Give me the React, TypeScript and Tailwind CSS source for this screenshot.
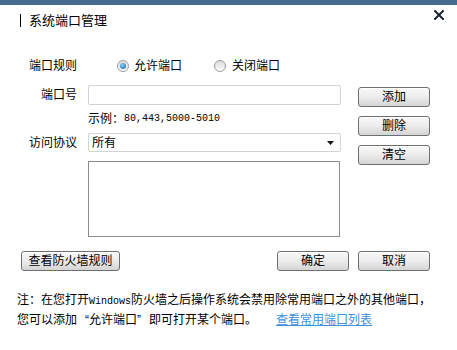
const btn =
  'flex h-[20px] items-center justify-center rounded-[3px] border border-[#6f6f6f] bg-gradient-to-b from-[#f8f8f8] via-[#ececec] to-[#d4d4d4] text-[12px] leading-none text-black shadow-[inset_0_1px_0_#ffffff]';

function Radio({ checked }: { checked: boolean }) {
  return (
    <span className="flex h-[12px] w-[12px] items-center justify-center rounded-full border border-[#9c9c9c] bg-gradient-to-b from-[#dcdcdc] to-[#fbfbfb]">
      {checked ? (
        <span className="h-[6px] w-[6px] rounded-full bg-[radial-gradient(circle_at_40%_35%,#8fd0ff,#0c5aa6)]" />
      ) : null}
    </span>
  );
}

export default function App() {
  return (
    <div className="h-[350px] w-[457px] overflow-hidden bg-white font-['Liberation_Sans','Noto_Sans_CJK_SC',sans-serif] text-[12px] text-black">
      <div className="h-[5px] bg-[#476a8f]" />

      {/* header */}
      <div className="flex h-[51px] items-start pl-[20px] pr-[13px]">
        <div className="mt-[8px] flex items-center">
          <span className="h-[13px] w-[1px] bg-black" />
          <span className="ml-[8px] text-[13px] leading-[15px]">系统端口管理</span>
        </div>
        <svg className="ml-auto mt-[5px]" width="10" height="10" viewBox="0 0 10 10">
          <path d="M1 1 L9 9 M9 1 L1 9" stroke="#1b2430" strokeWidth="2" strokeLinecap="square" />
        </svg>
      </div>

      <div className="flex">
        <div className="w-[341px]">
          <div className="flex h-[20px] items-center">
            <span className="w-[77px] text-right leading-none">端口规则</span>
            <div className="ml-[40px] flex items-center">
              <Radio checked />
              <span className="ml-[5px] leading-none">允许端口</span>
            </div>
            <div className="ml-[32px] flex items-center">
              <Radio checked={false} />
              <span className="ml-[6px] leading-none">关闭端口</span>
            </div>
          </div>

          <div className="mt-[9px] flex h-[20px] items-center">
            <span className="w-[77px] text-right leading-none">端口号</span>
            <div className="ml-[11px] h-[20px] w-[253px] rounded-[2px] border border-[#cdd4da] bg-white" />
          </div>

          <div className="mt-[7px] flex h-[14px] items-center pl-[88px] leading-none">
            示例：<span className="font-['Liberation_Mono',monospace] text-[10px]">80,443,5000-5010</span>
          </div>

          <div className="mt-[7px] flex h-[19px] items-center">
            <span className="w-[77px] text-right leading-none">访问协议</span>
            <div className="ml-[11px] flex h-[19px] w-[253px] items-center rounded-[2px] border border-[#cdd4da] bg-white pl-[3px] pr-[6px]">
              <span className="leading-none">所有</span>
              <svg className="ml-auto" width="7" height="4" viewBox="0 0 7 4">
                <path d="M0 0 H7 L3.5 4 Z" fill="#111" />
              </svg>
            </div>
          </div>

          <div className="ml-[88px] mt-[9px] h-[76px] w-[252px] border border-[#8c8c8c] bg-white" />
        </div>

        <div className="ml-[17px] flex flex-col gap-[9px] pt-[31px]">
          <button className={`${btn} w-[72px]`}>添加</button>
          <button className={`${btn} w-[72px]`}>删除</button>
          <button className={`${btn} w-[72px]`}>清空</button>
        </div>
      </div>

      <div className="mt-[14px] flex pl-[21px] pr-[27px]">
        <button className={`${btn} w-[99px]`}>查看防火墙规则</button>
        <button className={`${btn} ml-auto w-[72px]`}>确定</button>
        <button className={`${btn} ml-[9px] w-[72px]`}>取消</button>
      </div>

      <div className="mt-[20px] pl-[17px] leading-[18px]">
        <div className="whitespace-nowrap">
          注：在您打开<span className="font-['Liberation_Mono',monospace] text-[10px]">Windows</span>
          防火墙之后操作系统会禁用除常用端口之外的其他端口，
        </div>
        <div className="flex whitespace-nowrap">
          <span>
            您可以添加<span className="inline-block w-[12px] text-right">“</span>允许端口
            <span className="inline-block w-[12px] text-left">”</span>即可打开某个端口。
          </span>
          <a href="#" className="ml-[19px] text-[#3d8fe0] underline">
            查看常用端口列表
          </a>
        </div>
      </div>
    </div>
  );
}
